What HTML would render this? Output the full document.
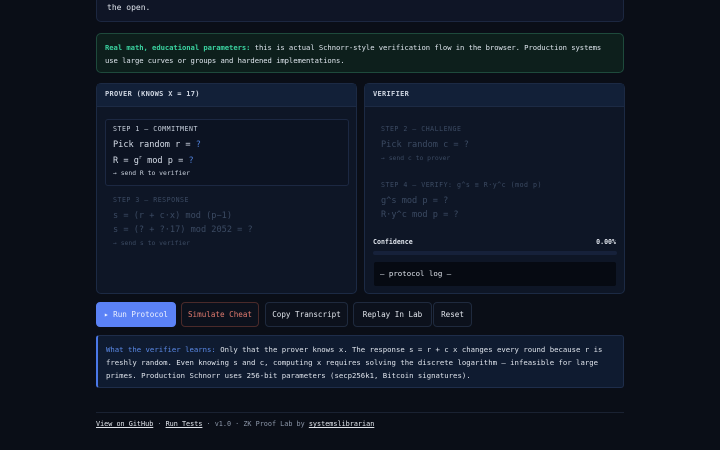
<!DOCTYPE html>
<html><head><meta charset="utf-8"><style>
*{box-sizing:border-box;margin:0;padding:0}
body{width:720px;height:450px;background:#0a0e17;font-family:"DejaVu Sans Mono","Liberation Mono",monospace;color:#d6dde8;overflow:hidden;position:relative;font-size:7.4px}
.abs{position:absolute}
.top{left:96px;top:-10px;width:528px;height:32px;background:#0f1526;border:1px solid #1c2740;border-radius:5px}
.top span{position:absolute;left:10px;top:12px;font-size:8px;color:#dfe4ec}
.note{left:96px;top:33px;width:528px;height:40px;background:#0d1f1c;border:1px solid #1e4a3c;border-radius:5px;padding:7px 8px;line-height:13px;color:#dfe6ee;font-size:7.2px;letter-spacing:-.05px;white-space:nowrap}
.note b{color:#3ad29f}
.panel{top:83px;width:261px;height:211px;background:#0e1626;border:1px solid #1c2a44;border-radius:5px}
.ph{height:23px;background:#122038;border-bottom:1px solid #1c2a44;padding:6px 8px;font-weight:bold;font-size:7px;color:#cfd6e2;letter-spacing:.3px}
.st{font-size:6.6px;letter-spacing:.5px}
.big{font-size:8.6px}
.sm{font-size:6.4px}
.q{color:#4f7fd8}
.dim{color:#3b4a62}
.btn{top:302px;height:25px;border:1px solid #1f2a3e;border-radius:4px;font-size:7.6px;text-align:center;line-height:23px;color:#e1e5ec;background:#0c111c}
.info{left:96px;top:335px;width:528px;height:53px;background:#0f1b30;border:1px solid #1e2d4a;border-left:2px solid #4a78e8;border-radius:3px;padding:7px 8px;line-height:13px;color:#dfe4ec;font-size:7.3px;white-space:nowrap}
.foot{left:96px;top:420px;font-size:6.8px;color:#8b96a8}
.foot u{color:#e1e5ec}
</style></head><body>
<div class="abs top"><span>the open.</span></div>
<div class="abs note"><b>Real math, educational parameters:</b> this is actual Schnorr-style verification flow in the browser. Production systems<br>use large curves or groups and hardened implementations.</div>

<div class="abs panel" style="left:96px">
 <div class="ph">PROVER (KNOWS X = 17)</div>
 <div class="abs" style="left:8px;top:35px;width:244px;height:67px;border:1px solid #1c2842;border-radius:3px;background:#0c1322"></div>
 <div class="abs st" style="left:16px;top:41px;color:#c8d0dc">STEP 1 — COMMITMENT</div>
 <div class="abs big" style="left:16px;top:56px">Pick random r = <span class="q">?</span></div>
 <div class="abs big" style="left:16px;top:71px">R = g<sup style="font-size:5px">r</sup> mod p = <span class="q">?</span></div>
 <div class="abs sm" style="left:16px;top:85px;color:#c8d0dc">→ send R to verifier</div>
 <div class="abs st dim" style="left:16px;top:112px">STEP 3 — RESPONSE</div>
 <div class="abs big dim" style="left:16px;top:127px">s = (r + c·x) mod (p−1)</div>
 <div class="abs big dim" style="left:16px;top:141px">s = (? + ?·17) mod 2052 = ?</div>
 <div class="abs sm dim" style="left:16px;top:155px">→ send s to verifier</div>
</div>

<div class="abs panel" style="left:364px;width:261px">
 <div class="ph">VERIFIER</div>
 <div class="abs st dim" style="left:16px;top:41px">STEP 2 — CHALLENGE</div>
 <div class="abs big dim" style="left:16px;top:56px">Pick random c = ?</div>
 <div class="abs sm dim" style="left:16px;top:70px">→ send c to prover</div>
 <div class="abs st dim" style="left:16px;top:97px">STEP 4 — VERIFY: g^s ≡ R·y^c (mod p)</div>
 <div class="abs big dim" style="left:16px;top:112px">g^s mod p = ?</div>
 <div class="abs big dim" style="left:16px;top:126px">R·y^c mod p = ?</div>
 <div class="abs" style="left:8px;top:154px;font-size:6.6px;font-weight:bold;color:#dfe4ec">Confidence</div>
 <div class="abs" style="right:8px;top:154px;font-size:6.6px;font-weight:bold;color:#dfe4ec">0.00%</div>
 <div class="abs" style="left:8px;top:167px;width:244px;height:4px;background:#16213a;border-radius:2px"></div>
 <div class="abs" style="left:9px;top:178px;width:242px;height:24px;background:#060a12;border-radius:2px;padding:7px 6px;font-size:7.4px;color:#dfe4ec">— protocol log —</div>
</div>

<div class="abs btn" style="left:96px;width:80px;background:#5b82f6;border-color:#5b82f6;color:#eef2ff">▸ Run Protocol</div>
<div class="abs btn" style="left:181px;width:78px;border-color:#4a2a2a;color:#e07a6e">Simulate Cheat</div>
<div class="abs btn" style="left:265px;width:83px">Copy Transcript</div>
<div class="abs btn" style="left:353px;width:79px">Replay In Lab</div>
<div class="abs btn" style="left:433px;width:39px">Reset</div>

<div class="abs info"><span style="color:#5b8ae8">What the verifier learns:</span> Only that the prover knows x. The response s = r + c x changes every round because r is<br>freshly random. Even knowing s and c, computing x requires solving the discrete logarithm — infeasible for large<br>primes. Production Schnorr uses 256-bit parameters (secp256k1, Bitcoin signatures).</div>

<div class="abs" style="left:96px;top:412px;width:528px;height:1px;background:#1a2232"></div>
<div class="abs foot"><u>View on GitHub</u> · <u>Run Tests</u> · v1.0 · ZK Proof Lab by <u>systemslibrarian</u></div>
</body></html>
